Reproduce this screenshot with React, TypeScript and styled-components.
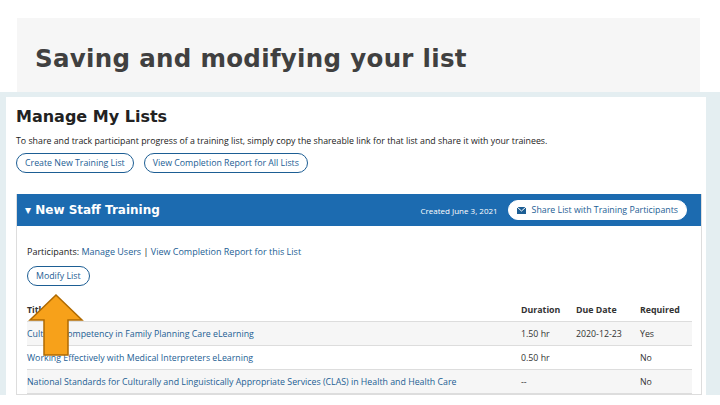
import * as React from 'react';
import styled, { createGlobalStyle } from 'styled-components';

const Global = createGlobalStyle`
  html, body { margin: 0; padding: 0; background: #fff; }
  body { width: 720px; height: 405px; overflow: hidden; font-family: 'Open Sans', 'Liberation Sans', sans-serif; }
`;

const Slide = styled.div`
  width: 720px;
  height: 405px;
  display: flex;
  flex-direction: column;
  position: relative;
`;

const TitleBox = styled.div`
  margin: 18px 20px 0 17px;
  height: 74px;
  background: #f6f6f6;
  padding: 26px 0 0 18px;
  box-sizing: border-box;
  font-family: 'DejaVu Sans', 'Liberation Sans', sans-serif;
  font-weight: 700;
  font-size: 24.5px;
  letter-spacing: 0.3px;
  color: #404040;
`;

const Shot = styled.div`
  flex: 1;
  background: #e4eef1;
  padding: 5px 14px 0 6px;
  display: flex;
  margin-bottom: 10px;
  overflow: hidden;
`;

const Page = styled.div`
  flex: 1;
  background: #fff;
  padding: 10px 4px 0 10px;
  color: #222;
  font-size: 9px;
`;

const H1 = styled.div`
  font-family: 'DejaVu Sans', 'Noto Sans', sans-serif;
  font-weight: 700;
  font-size: 16px;
  color: #222;
`;

const Desc = styled.div`
  margin-top: 9px;
  font-size: 8.8px;
`;

const Row = styled.div`
  display: flex;
  gap: 10px;
  margin-top: 6px;
`;

const Pill = styled.div<{ $light?: boolean }>`
  border: 1px solid ${p => (p.$light ? '#fff' : '#1d5e94')};
  background: #fff;
  color: #1d5e94;
  border-radius: 10px;
  padding: 3px 8px;
  font-size: 8.8px;
  display: flex;
  align-items: center;
  gap: 6px;
`;

const Card = styled.div`
  margin-top: 21px;
  border: 1px solid #ddd;
  border-top: none;
`;

const Bar = styled.div`
  background: #1c6bb0;
  height: 32px;
  display: flex;
  align-items: center;
  padding: 0 14px 0 8px;
  color: #fff;
`;

const BarTitle = styled.div`
  font-family: 'DejaVu Sans', 'Noto Sans', sans-serif;
  font-weight: 700;
  font-size: 12px;
  flex: 1;
`;

const Created = styled.div`
  font-size: 8px;
  margin-right: 10px;
`;

const Body = styled.div`
  padding: 19px 9px 0 10px;
`;

const Link = styled.span`
  color: #1d5e94;
`;

const Table = styled.div`
  margin-top: 12px;
  font-size: 8.8px;
`;

const TRow = styled.div<{ $shade?: boolean; $head?: boolean }>`
  display: grid;
  grid-template-columns: 1fr 55px 64px 52px;
  align-items: center;
  height: 23px;
  border-bottom: 1px solid #ddd;
  background: ${p => (p.$shade ? '#f6f6f6' : '#fff')};
  font-weight: ${p => (p.$head ? 700 : 400)};
  color: #333;
`;

const Arrow = styled.svg`
  position: absolute;
  left: 28px;
  top: 294px;
`;

const rows = [
  ['Cultural Competency in Family Planning Care eLearning', '1.50 hr', '2020-12-23', 'Yes'],
  ['Working Effectively with Medical Interpreters eLearning', '0.50 hr', '', 'No'],
  ['National Standards for Culturally and Linguistically Appropriate Services (CLAS) in Health and Health Care', '--', '', 'No'],
];

export default function App() {
  return (
    <Slide>
      <Global />
      <TitleBox>Saving and modifying your list</TitleBox>
      <Shot>
        <Page>
          <H1>Manage My Lists</H1>
          <Desc>To share and track participant progress of a training list, simply copy the shareable link for that list and share it with your trainees.</Desc>
          <Row>
            <Pill>Create New Training List</Pill>
            <Pill>View Completion Report for All Lists</Pill>
          </Row>
          <Card>
            <Bar>
              <BarTitle>▾ New Staff Training</BarTitle>
              <Created>Created June 3, 2021</Created>
              <Pill $light>
                <svg width="9" height="7" viewBox="0 0 9 7"><rect width="9" height="7" fill="#1d5e94" /><path d="M0 0 L4.5 4 L9 0" stroke="#fff" fill="none" /></svg>
                Share List with Training Participants
              </Pill>
            </Bar>
            <Body>
              <div>Participants: <Link>Manage Users</Link> | <Link>View Completion Report for this List</Link></div>
              <Row style={{ marginTop: 8 }}>
                <Pill>Modify List</Pill>
              </Row>
              <Table>
                <TRow $head><span>Title</span><span>Duration</span><span>Due Date</span><span>Required</span></TRow>
                {rows.map((r, i) => (
                  <TRow key={i} $shade={i !== 1}>
                    <Link>{r[0]}</Link><span>{r[1]}</span><span>{r[2]}</span><span>{r[3]}</span>
                  </TRow>
                ))}
              </Table>
            </Body>
          </Card>
        </Page>
      </Shot>
      <Arrow width="56" height="62" viewBox="0 0 56 62">
        <path d="M28 1 L54 26 L40 26 L40 61 L16 61 L16 26 L2 26 Z" fill="#f7a11a" stroke="#b06a00" strokeWidth="1.5" />
      </Arrow>
    </Slide>
  );
}
